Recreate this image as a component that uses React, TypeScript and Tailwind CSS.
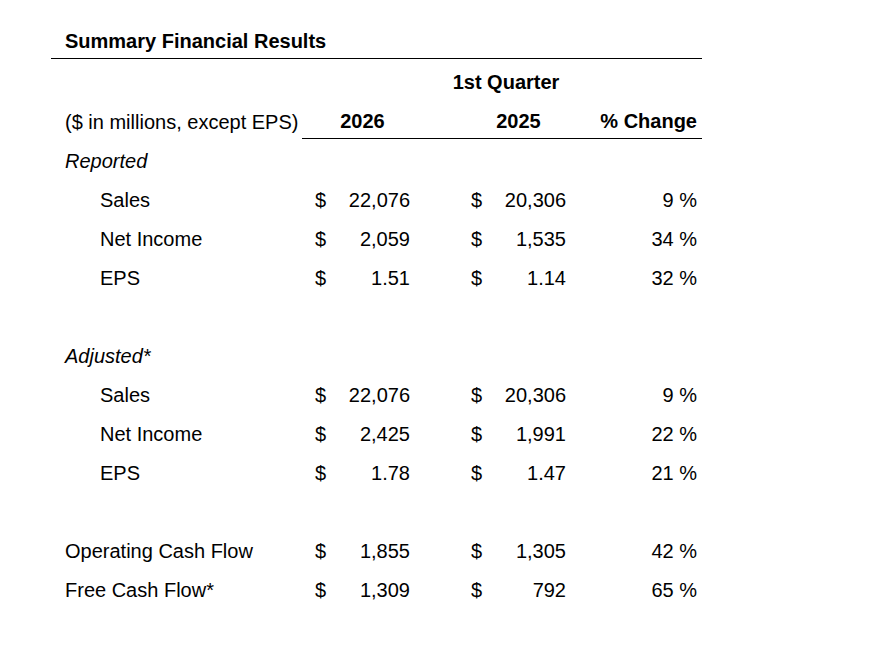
type Row = {
  label: string;
  indent?: boolean;
  italic?: boolean;
  cur?: string;
  prev?: string;
  change?: string;
};

const rows: Row[] = [
  { label: "Reported", italic: true },
  { label: "Sales", indent: true, cur: "22,076", prev: "20,306", change: "9 %" },
  { label: "Net Income", indent: true, cur: "2,059", prev: "1,535", change: "34 %" },
  { label: "EPS", indent: true, cur: "1.51", prev: "1.14", change: "32 %" },
  { label: "" },
  { label: "Adjusted*", italic: true },
  { label: "Sales", indent: true, cur: "22,076", prev: "20,306", change: "9 %" },
  { label: "Net Income", indent: true, cur: "2,425", prev: "1,991", change: "22 %" },
  { label: "EPS", indent: true, cur: "1.78", prev: "1.47", change: "21 %" },
  { label: "" },
  { label: "Operating Cash Flow", cur: "1,855", prev: "1,305", change: "42 %" },
  { label: "Free Cash Flow*", cur: "1,309", prev: "792", change: "65 %" },
];

function Money({ value }: { value?: string }) {
  if (!value) return <div />;
  return (
    <div className="flex pl-[13px] pr-[48px]">
      <span>$</span>
      <span className="flex-1 text-right">{value}</span>
    </div>
  );
}

export default function App() {
  return (
    <div className="w-[895px] h-[646px] bg-white text-black text-[20px] leading-none" style={{ fontFamily: '"Liberation Sans", Arial, sans-serif' }}>
      <div className="ml-[51px] w-[651px] pt-[23px]">
        {/* Title */}
        <div className="border-b border-black pl-[14px] h-[36px] flex items-center font-bold">
          Summary Financial Results
        </div>

        {/* Header */}
        <div className="grid grid-cols-[251px_400px] h-[43px] items-center">
          <div />
          <div className="text-center font-bold pl-[8px] pt-[2px]">1st Quarter</div>
        </div>
        <div className="grid grid-cols-[251px_400px] h-[37px] items-center">
          <div className="pl-[14px] pt-[2px]">($ in millions, except EPS)</div>
          <div className="border-b border-black grid grid-cols-[156px_156px_88px] h-full items-center font-bold whitespace-nowrap pt-[2px]">
            <div className="ml-[13px] w-[95px] text-center">2026</div>
            <div className="ml-[13px] w-[95px] text-center">2025</div>
            <div className="flex justify-end pr-[5px]">% Change</div>
          </div>
        </div>

        {/* Body */}
        <div className="pt-[2px]">
          {rows.map((r, i) => (
            <div key={i} className="grid grid-cols-[251px_156px_156px_88px] h-[39px] items-center whitespace-nowrap">
              <div className={(r.indent ? "pl-[49px]" : "pl-[14px]") + (r.italic ? " italic" : "")}>{r.label}</div>
              <Money value={r.cur} />
              <Money value={r.prev} />
              <div className="text-right pr-[5px]">{r.change}</div>
            </div>
          ))}
        </div>
      </div>
    </div>
  );
}
